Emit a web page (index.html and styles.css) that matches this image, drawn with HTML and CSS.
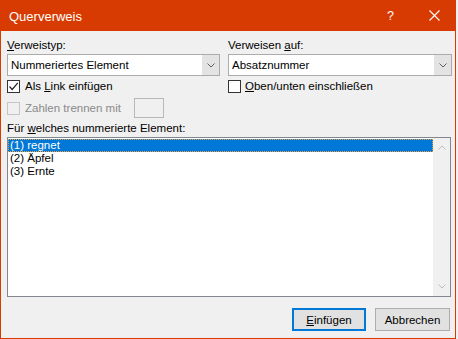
FILE: index.html
```html
<!DOCTYPE html>
<html lang="de">
<head>
  <meta charset="utf-8" />
  <title>Querverweis</title>
  <link rel="stylesheet" href="styles.css">
</head>
<body>
  <div class="dialog">
    <div class="titlebar">
      <span class="title">Querverweis</span>
      <span class="help">?</span>
      <span class="close">
        <svg width="11" height="11" viewBox="0 0 11 11"><path d="M0.5 0.5 L10.5 10.5 M10.5 0.5 L0.5 10.5" stroke="#fff" stroke-width="1.1" fill="none"/></svg>
      </span>
    </div>

    <div class="content">
      <div class="cols">
        <div class="col col-left">
          <div class="label"><u>V</u>erweistyp:</div>
          <div class="select">
            <span class="select-text">Nummeriertes Element</span>
            <span class="drop"><svg width="8" height="5" viewBox="0 0 8 5"><path d="M0.5 0.5 L4 4 L7.5 0.5" stroke="#606060" fill="none"/></svg></span>
          </div>
          <div class="check">
            <span class="box"><svg width="11" height="11" viewBox="0 0 11 11"><path d="M1.5 5.5 L4.2 8.5 L9.8 1.8" stroke="#222" stroke-width="1.2" fill="none"/></svg></span>
            Als&nbsp;<u>L</u>ink einfügen
          </div>
          <div class="check disabled">
            <span class="box"></span>
            Zahlen trennen mit
            <span class="sep-input"></span>
          </div>
        </div>

        <div class="col col-right">
          <div class="label">Verweisen <u>a</u>uf:</div>
          <div class="select">
            <span class="select-text">Absatznummer</span>
            <span class="drop"><svg width="8" height="5" viewBox="0 0 8 5"><path d="M0.5 0.5 L4 4 L7.5 0.5" stroke="#606060" fill="none"/></svg></span>
          </div>
          <div class="check">
            <span class="box"></span>
            <span><u>O</u>ben/unten einschließen</span>
          </div>
        </div>
      </div>

      <div class="label list-label">Für <u>w</u>elches nummerierte Element:</div>
      <div class="listbox">
        <ul class="items">
          <li class="selected">(1) regnet</li>
          <li>(2) Äpfel</li>
          <li>(3) Ernte</li>
        </ul>
        <div class="scrollbar">
          <svg width="8" height="5" viewBox="0 0 8 5"><path d="M0.5 4.5 L4 1 L7.5 4.5" stroke="#bdbdbd" fill="none"/></svg>
          <svg width="8" height="5" viewBox="0 0 8 5"><path d="M0.5 0.5 L4 4 L7.5 0.5" stroke="#bdbdbd" fill="none"/></svg>
        </div>
      </div>

      <div class="buttons">
        <button class="btn btn-default"><u>E</u>infügen</button>
        <button class="btn">Abbrechen</button>
      </div>
    </div>
  </div>
</body>
</html>
```

FILE: styles.css
```css
body {
  margin: 0;
  background-color: #f0f0f0;
  font-family: "Liberation Sans", Arial, sans-serif;
  font-size: 11.5px;
  color: #000;
}
.dialog {
  width: 454px;
  height: 338px;
  border: 1px solid #d83b01;
  border-top: none;
  background-color: #f0f0f0;
  display: flex;
  flex-direction: column;
}
.titlebar {
  height: 31px;
  margin: 0 -1px;
  background-color: #d83b01;
  color: #fff;
  display: flex;
  align-items: center;
}
.title {
  font-size: 13px;
  padding-left: 9px;
  padding-top: 1px;
  flex: 1;
}
.help {
  font-size: 12.5px;
  width: 14px;
  margin-right: 28px;
  padding-top: 1px;
}
.close {
  width: 11px;
  height: 11px;
  margin-right: 16px;
  display: flex;
}
.content {
  padding: 7px 4px 7px 6px;
  display: flex;
  flex-direction: column;
}
.cols {
  display: grid;
  grid-template-columns: 213px 224px;
  column-gap: 8px;
}
.label {
  line-height: 15px;
  height: 15px;
  margin-bottom: 1px;
}
.select {
  height: 20px;
  border: 1px solid #acacac;
  background-color: #fff;
  display: flex;
  align-items: center;
}
.select-text {
  flex: 1;
  padding-left: 3px;
  line-height: 18px;
}
.drop {
  width: 17px;
  height: 20px;
  background-color: #e3e3e3;
  display: flex;
  align-items: center;
  justify-content: center;
}
.check {
  display: flex;
  align-items: center;
  margin-top: 4px;
  height: 13px;
  line-height: 13px;
  white-space: nowrap;
}
.box {
  width: 11px;
  height: 11px;
  border: 1px solid #333;
  background-color: #fff;
  margin-right: 5px;
  display: flex;
}
.col-right .box {
  margin-right: 4px;
}
.check.disabled {
  margin-top: 5px;
  height: 20px;
  color: #8a8a8a;
}
.check.disabled .box {
  border-color: #c6c6c6;
  background-color: #f0f0f0;
}
.sep-input {
  width: 28px;
  height: 18px;
  margin-left: 13px;
  border: 1px solid #b9b9b9;
  background-color: #f0f0f0;
}
.list-label {
  margin-top: 3px;
}
.listbox {
  height: 158px;
  border: 1px solid #828790;
  background-color: #fff;
  display: flex;
}
.items {
  list-style: none;
  margin: 0;
  padding: 1px 0 0 0;
  flex: 1;
}
.items li {
  height: 13px;
  line-height: 13px;
  padding-left: 2px;
}
.items li.selected {
  background-color: #0078d7;
  color: #fff;
  outline: 1px dotted #f0a040;
  outline-offset: -1px;
}
.scrollbar {
  width: 17px;
  background-color: #f0f0f0;
  display: flex;
  flex-direction: column;
  justify-content: space-between;
  align-items: center;
  padding: 7px 0 7px 0;
}
.buttons {
  display: flex;
  justify-content: flex-end;
  gap: 9px;
  margin-top: 11px;
  padding-right: 1px;
}
.btn {
  font-family: inherit;
  font-size: 11.5px;
  height: 23px;
  width: 75px;
  background-color: #e1e1e1;
  border: 1px solid #adadad;
  padding: 0;
  color: #000;
}
.btn-default {
  width: 74px;
  border: 2px solid #0078d7;
}
```
